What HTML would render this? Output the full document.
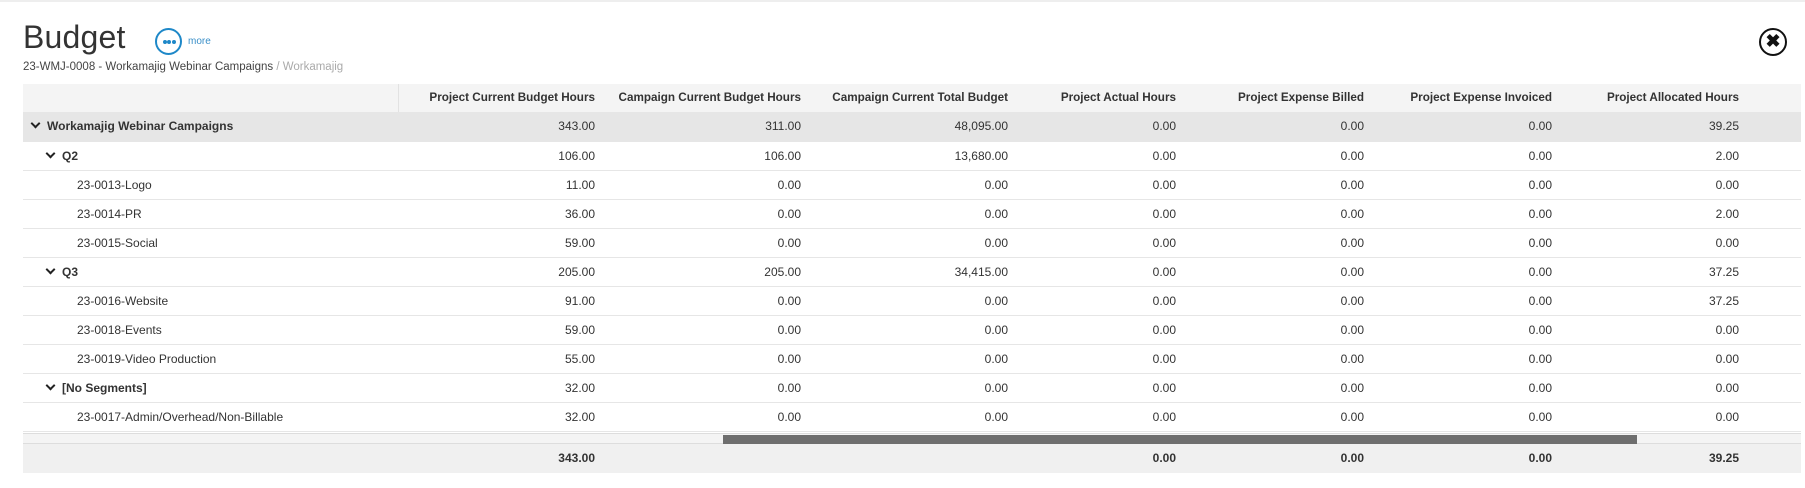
<!DOCTYPE html>
<html><head><meta charset="utf-8"><style>
*{margin:0;padding:0;box-sizing:border-box}
body{width:1805px;height:488px;background:#fff;font-family:"Liberation Sans",sans-serif;color:#333;position:relative;overflow:hidden}
.top{position:absolute;left:0;top:0;width:1805px;height:2px;background:#eee}
h1{position:absolute;left:23px;top:19px;font-size:32px;font-weight:normal;color:#333;letter-spacing:0.2px}
.more{position:absolute;left:155px;top:28px;width:27px;height:27px;border:2px solid #1e88c8;border-radius:50%;}
.more i{position:absolute;top:9.5px;width:4px;height:4px;border-radius:50%;background:#1e88c8}
.moret{position:absolute;left:188px;top:36px;font-size:10px;color:#3a8fc8}
.sub{position:absolute;left:23px;top:61px;font-size:11.5px;color:#444}
.sub span{color:#aaa}
.close{position:absolute;left:1759px;top:28px;width:28px;height:28px;border:2.5px solid #111;border-radius:50%;font-size:18px;font-weight:bold;line-height:22px;text-align:center;color:#111}
.row{position:absolute;left:23px;width:1778px;height:29px;border-bottom:1px solid #e6e6e6;font-size:12px;}
.row div{position:absolute;top:0;height:29px;line-height:28px;text-align:right}
.lab{left:0;text-align:left!important}
.hdr{background:#f4f4f4;font-weight:bold;height:28px;border-bottom:none;font-size:11.7px}
.hdr .sep{left:375px;width:1px;background:#e2e2e2}
.b{font-weight:bold}
.chev{display:inline-block;width:7px;height:7px;border-right:2px solid #222;border-bottom:2px solid #222;transform:rotate(45deg);margin-right:8px;position:relative;top:-3px}
</style></head><body>
<div class="top"></div>
<h1>Budget</h1>
<div class="more"><i style="left:5.5px"></i><i style="left:10px"></i><i style="left:14.5px"></i></div>
<div class="moret">more</div>
<div class="sub">23-WMJ-0008 - Workamajig Webinar Campaigns <span>/ Workamajig</span></div>
<div class="close">✖</div>

<div class="row hdr" style="top:84px"><div class="sep"></div>
<div style="left:375px;width:197px">Project Current Budget Hours</div>
<div style="left:572px;width:206px">Campaign Current Budget Hours</div>
<div style="left:778px;width:207px">Campaign Current Total Budget</div>
<div style="left:985px;width:168px">Project Actual Hours</div>
<div style="left:1153px;width:188px">Project Expense Billed</div>
<div style="left:1341px;width:188px">Project Expense Invoiced</div>
<div style="left:1529px;width:187px">Project Allocated Hours</div>
</div>

<div class="row" style="top:112px;background:#e6e6e6;height:30px">
<div class="lab b" style="padding-left:9px"><span class="chev"></span>Workamajig Webinar Campaigns</div>
<div style="left:375px;width:197px">343.00</div><div style="left:572px;width:206px">311.00</div><div style="left:778px;width:207px">48,095.00</div><div style="left:985px;width:168px">0.00</div><div style="left:1153px;width:188px">0.00</div><div style="left:1341px;width:188px">0.00</div><div style="left:1529px;width:187px">39.25</div></div>

<div class="row" style="top:142px"><div class="lab b" style="padding-left:24px"><span class="chev"></span>Q2</div>
<div style="left:375px;width:197px">106.00</div><div style="left:572px;width:206px">106.00</div><div style="left:778px;width:207px">13,680.00</div><div style="left:985px;width:168px">0.00</div><div style="left:1153px;width:188px">0.00</div><div style="left:1341px;width:188px">0.00</div><div style="left:1529px;width:187px">2.00</div></div>

<div class="row" style="top:171px"><div class="lab" style="padding-left:54px">23-0013-Logo</div>
<div style="left:375px;width:197px">11.00</div><div style="left:572px;width:206px">0.00</div><div style="left:778px;width:207px">0.00</div><div style="left:985px;width:168px">0.00</div><div style="left:1153px;width:188px">0.00</div><div style="left:1341px;width:188px">0.00</div><div style="left:1529px;width:187px">0.00</div></div>

<div class="row" style="top:200px"><div class="lab" style="padding-left:54px">23-0014-PR</div>
<div style="left:375px;width:197px">36.00</div><div style="left:572px;width:206px">0.00</div><div style="left:778px;width:207px">0.00</div><div style="left:985px;width:168px">0.00</div><div style="left:1153px;width:188px">0.00</div><div style="left:1341px;width:188px">0.00</div><div style="left:1529px;width:187px">2.00</div></div>

<div class="row" style="top:229px"><div class="lab" style="padding-left:54px">23-0015-Social</div>
<div style="left:375px;width:197px">59.00</div><div style="left:572px;width:206px">0.00</div><div style="left:778px;width:207px">0.00</div><div style="left:985px;width:168px">0.00</div><div style="left:1153px;width:188px">0.00</div><div style="left:1341px;width:188px">0.00</div><div style="left:1529px;width:187px">0.00</div></div>

<div class="row" style="top:258px"><div class="lab b" style="padding-left:24px"><span class="chev"></span>Q3</div>
<div style="left:375px;width:197px">205.00</div><div style="left:572px;width:206px">205.00</div><div style="left:778px;width:207px">34,415.00</div><div style="left:985px;width:168px">0.00</div><div style="left:1153px;width:188px">0.00</div><div style="left:1341px;width:188px">0.00</div><div style="left:1529px;width:187px">37.25</div></div>

<div class="row" style="top:287px"><div class="lab" style="padding-left:54px">23-0016-Website</div>
<div style="left:375px;width:197px">91.00</div><div style="left:572px;width:206px">0.00</div><div style="left:778px;width:207px">0.00</div><div style="left:985px;width:168px">0.00</div><div style="left:1153px;width:188px">0.00</div><div style="left:1341px;width:188px">0.00</div><div style="left:1529px;width:187px">37.25</div></div>

<div class="row" style="top:316px"><div class="lab" style="padding-left:54px">23-0018-Events</div>
<div style="left:375px;width:197px">59.00</div><div style="left:572px;width:206px">0.00</div><div style="left:778px;width:207px">0.00</div><div style="left:985px;width:168px">0.00</div><div style="left:1153px;width:188px">0.00</div><div style="left:1341px;width:188px">0.00</div><div style="left:1529px;width:187px">0.00</div></div>

<div class="row" style="top:345px"><div class="lab" style="padding-left:54px">23-0019-Video Production</div>
<div style="left:375px;width:197px">55.00</div><div style="left:572px;width:206px">0.00</div><div style="left:778px;width:207px">0.00</div><div style="left:985px;width:168px">0.00</div><div style="left:1153px;width:188px">0.00</div><div style="left:1341px;width:188px">0.00</div><div style="left:1529px;width:187px">0.00</div></div>

<div class="row" style="top:374px"><div class="lab b" style="padding-left:24px"><span class="chev"></span>[No Segments]</div>
<div style="left:375px;width:197px">32.00</div><div style="left:572px;width:206px">0.00</div><div style="left:778px;width:207px">0.00</div><div style="left:985px;width:168px">0.00</div><div style="left:1153px;width:188px">0.00</div><div style="left:1341px;width:188px">0.00</div><div style="left:1529px;width:187px">0.00</div></div>

<div class="row" style="top:403px"><div class="lab" style="padding-left:54px">23-0017-Admin/Overhead/Non-Billable</div>
<div style="left:375px;width:197px">32.00</div><div style="left:572px;width:206px">0.00</div><div style="left:778px;width:207px">0.00</div><div style="left:985px;width:168px">0.00</div><div style="left:1153px;width:188px">0.00</div><div style="left:1341px;width:188px">0.00</div><div style="left:1529px;width:187px">0.00</div></div>

<div style="position:absolute;left:23px;top:433px;width:1778px;height:11px;background:#f4f4f4;border-top:1px solid #ddd;border-bottom:1px solid #ddd"></div>
<div style="position:absolute;left:723px;top:435px;width:914px;height:9px;background:#6e6e6e"></div>

<div class="row b" style="top:444px;background:#f0f0f0;border-bottom:none">
<div style="left:375px;width:197px">343.00</div><div style="left:985px;width:168px">0.00</div><div style="left:1153px;width:188px">0.00</div><div style="left:1341px;width:188px">0.00</div><div style="left:1529px;width:187px">39.25</div></div>
</body></html>
